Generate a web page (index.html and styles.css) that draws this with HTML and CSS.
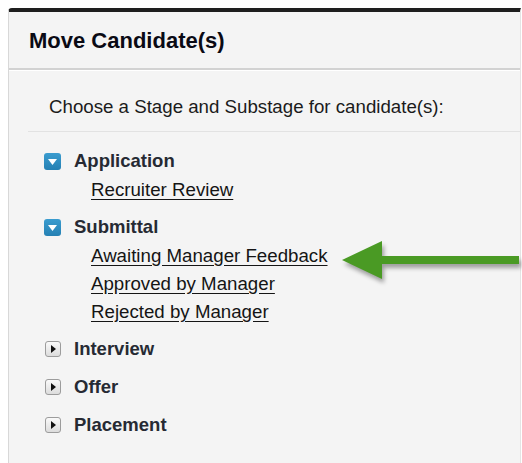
FILE: index.html
```html
<!DOCTYPE html>
<html lang="en">
<head>
<meta charset="utf-8">
<title>Move Candidate(s)</title>
<link rel="stylesheet" href="styles.css">
</head>
<body>
<div class="panel">
  <div class="panel-header">
    <h1 class="title">Move Candidate(s)</h1>
  </div>
  <div class="panel-body">
    <p class="intro">Choose a Stage and Substage for candidate(s):</p>
    <div class="rule"></div>
    <ul class="stages">
      <li class="stage">
        <div class="stage-row">
          <span class="toggle toggle-open"><svg width="9" height="6" viewBox="0 0 9 6"><path d="M0 0H9L4.5 6Z" fill="#fff"/></svg></span>
          <span class="stage-name">Application</span>
        </div>
        <ul class="substages">
          <li><a href="#" class="substage">Recruiter Review</a></li>
        </ul>
      </li>
      <li class="stage">
        <div class="stage-row">
          <span class="toggle toggle-open"><svg width="9" height="6" viewBox="0 0 9 6"><path d="M0 0H9L4.5 6Z" fill="#fff"/></svg></span>
          <span class="stage-name">Submittal</span>
        </div>
        <ul class="substages">
          <li><a href="#" class="substage">Awaiting Manager Feedback</a></li>
          <li><a href="#" class="substage">Approved by Manager</a></li>
          <li><a href="#" class="substage">Rejected by Manager</a></li>
        </ul>
      </li>
      <li class="stage">
        <div class="stage-row">
          <span class="toggle toggle-closed"><svg width="5" height="8" viewBox="0 0 5 8"><path d="M0 0L5 4L0 8Z" fill="#111"/></svg></span>
          <span class="stage-name">Interview</span>
        </div>
      </li>
      <li class="stage">
        <div class="stage-row">
          <span class="toggle toggle-closed"><svg width="5" height="8" viewBox="0 0 5 8"><path d="M0 0L5 4L0 8Z" fill="#111"/></svg></span>
          <span class="stage-name">Offer</span>
        </div>
      </li>
      <li class="stage">
        <div class="stage-row">
          <span class="toggle toggle-closed"><svg width="5" height="8" viewBox="0 0 5 8"><path d="M0 0L5 4L0 8Z" fill="#111"/></svg></span>
          <span class="stage-name">Placement</span>
        </div>
      </li>
    </ul>
  </div>
</div>
<svg class="pointer" width="182" height="52" viewBox="0 0 182 52">
  <path d="M3 24L43 5V20H180V28H43V43Z" fill="#4a9a24"/>
</svg>
</body>
</html>
```
FILE: styles.css
```css
html, body {
  margin: 0;
  padding: 0;
  background: #fff;
  height: 100%;
  overflow: hidden;
}

body {
  font-family: "Liberation Sans", Arial, Helvetica, sans-serif;
  color: #1b1b1b;
}

.panel {
  margin: 8px 1px 0 8px;
  height: calc(100vh - 8px);
  box-sizing: border-box;
  background: #f4f4f4;
  border-top: 4px solid #1e1e1e;
  border-left: 1px solid #d8d8d8;
  border-right: 1px solid #e4e4e4;
  border-top-left-radius: 4px;
}

.panel-header {
  height: 56px;
  display: flex;
  align-items: center;
  padding-left: 20px;
  border-bottom: 2px solid #d2d2d2;
  box-shadow: 0 1px 0 #fff;
}

.title {
  margin: 2px 0 0 0;
  font-size: 22px;
  font-weight: bold;
  color: #0a0a14;
}

.panel-body {
  padding-top: 25px;
}

.intro {
  margin: 0 0 0 40px;
  font-size: 18.7px;
  line-height: 24px;
  color: #1b1b1b;
}

.rule {
  margin: 12px 0 0 19px;
  height: 1px;
  background: #e2e2e2;
}

.stages {
  list-style: none;
  margin: 14px 0 0 0;
  padding: 0 0 0 35px;
}

.stage {
  margin-bottom: 8px;
}

.stage-row {
  display: flex;
  align-items: center;
  height: 30px;
}

.stage-name {
  font-size: 18.5px;
  font-weight: bold;
  color: #262a33;
}

.toggle {
  display: inline-flex;
  align-items: center;
  justify-content: center;
  box-sizing: border-box;
  margin-right: 13px;
  flex: none;
}

.toggle-open {
  width: 17px;
  height: 17px;
  border-radius: 3px;
  background: linear-gradient(#3a9ccf, #2580b3);
  margin-top: 1px;
}

.toggle-open svg {
  margin-top: 1px;
}

.toggle-closed {
  width: 16px;
  height: 16px;
  margin: 0 13px 0 1px;
  border: 1px solid #9c9c9c;
  border-radius: 3px;
  background: linear-gradient(#fafafa, #dcdcdc);
}

.toggle-closed svg {
  margin-left: 1px;
}

.substages {
  list-style: none;
  margin: 0;
  padding: 0 0 0 47px;
}

.substages li {
  height: 28px;
  display: flex;
  align-items: center;
}

.substage {
  font-size: 18.7px;
  color: #151515;
  text-decoration: underline;
  text-underline-offset: 3px;
}

.pointer {
  position: absolute;
  left: 339px;
  top: 236px;
  filter: drop-shadow(2px 4px 2px rgba(0, 0, 0, 0.35));
}
```
